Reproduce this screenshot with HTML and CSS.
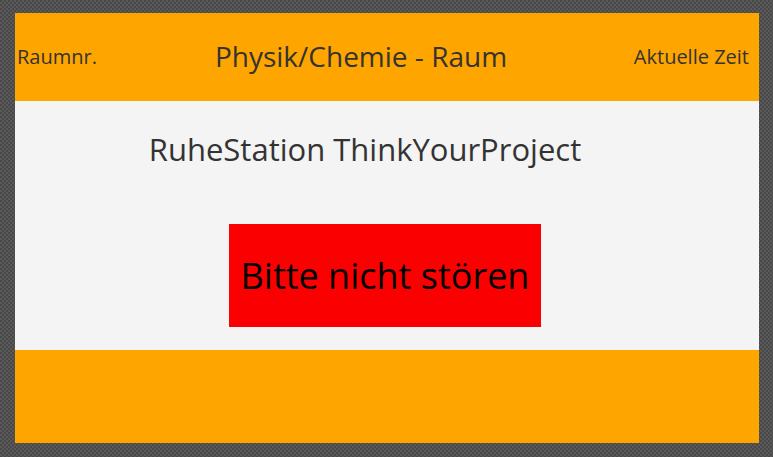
FILE: index.html
```html
<!DOCTYPE html>
<html lang="de">
<head>
<meta charset="utf-8">
<meta name="viewport" content="width=device-width, initial-scale=1">
<title>RuheStation</title>
<link rel="stylesheet" href="styles.css">
</head>
<body>
<div class="panel">
  <header class="bar">
    <span class="side">Raumnr.</span>
    <h1 class="room">Physik/Chemie - Raum</h1>
    <span class="side time">Aktuelle Zeit</span>
  </header>
  <main class="content">
    <h2 class="project">RuheStation ThinkYourProject</h2>
    <p class="notice" role="status">Bitte nicht stören</p>
  </main>
  <footer class="footer"></footer>
</div>
</body>
</html>
```
FILE: styles.css
```css
* { box-sizing: border-box; }

body {
  display: flex;
  min-height: 100vh;
  margin: 0;
  padding: 13px 14px 14px 15px;
  background: repeating-conic-gradient(#5a5a5a 0 25%, #484848 0 50%) 0 0 / 4px 4px;
  color: #333;
  font-family: "Segoe UI", "Open Sans", "Noto Sans", sans-serif;
}

h1, h2, p { margin: 0; font-weight: 400; }

.panel {
  display: flex;
  flex: 1;
  flex-direction: column;
  background: #f4f4f4;
}

.bar {
  display: grid;
  grid-template-columns: 1fr auto 1fr;
  align-items: center;
  min-height: 88px;
  padding: 0 10px 2px 2px;
  background: #ffa500;
}

.side { padding-top: 2px; font-size: 20px; line-height: 28px; }
.time { text-align: right; }

.room {
  padding-right: 44px;
  font-size: 28px;
  line-height: 36px;
}

.content {
  display: flex;
  flex: 1;
  flex-direction: column;
  align-items: center;
  padding: 24px 4px 23px 0;
}

.project {
  padding-right: 40px;
  font-size: 31px;
  line-height: 48px;
}

.notice {
  margin-top: auto;
  padding: 24px 12px;
  background: #fa0000;
  color: #000;
  font-size: 36px;
  line-height: 55px;
}

.footer { min-height: 93px; background: #ffa500; }
```
